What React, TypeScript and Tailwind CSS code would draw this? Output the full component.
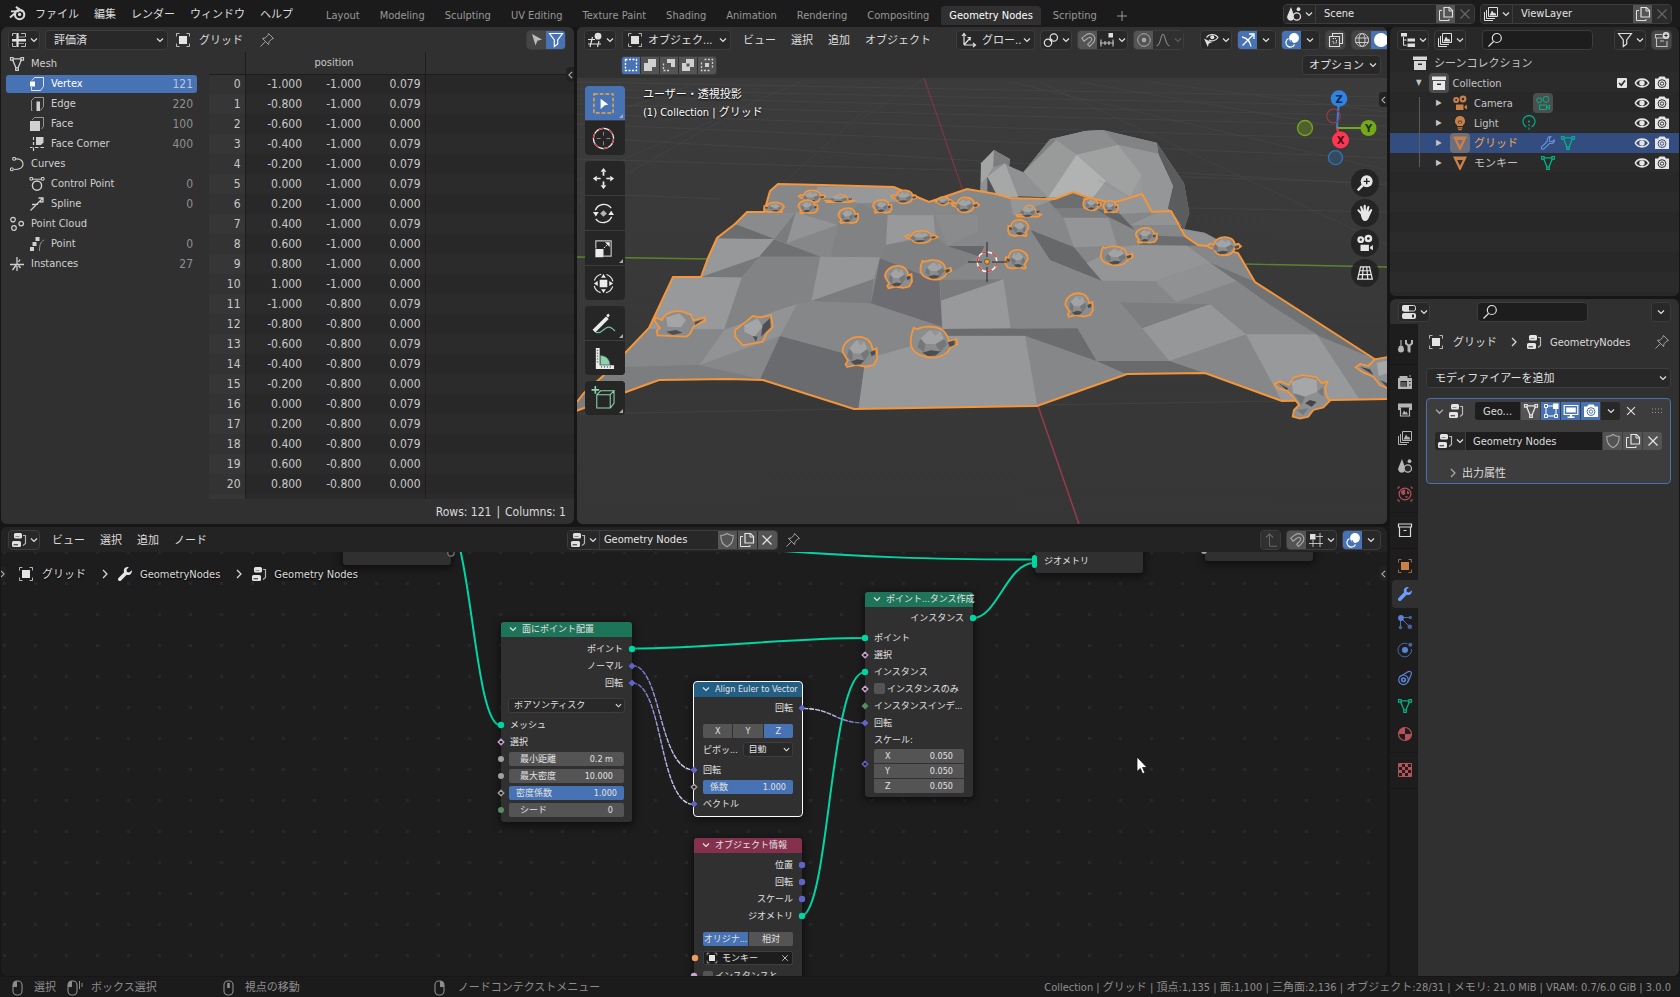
import React from "react";

/* ---------- icons (16 x 16 grid) ---------- */

const S = { fill: "currentColor", stroke: "none" } as const;

const ICONS: Record<string, React.ReactNode> = {
  blender: (
    <>
      <circle cx="10" cy="9" r="4.4" strokeWidth="2" />
      <circle cx="10" cy="9" r="1.6" {...S} />
      <path d="M6.5 1.8 13 6.2M1.8 6h8M.9 11.8 6.5 7" strokeWidth="1.8" />
    </>
  ),
  sheet: (
    <>
      <path d="M1.5 4V1.5H5M10 1.5h4.5V5M1.5 11v3.5H5M10 14.5h4.5V11" strokeWidth="1" opacity=".8" />
      <path d="M6.5 1.5v13M1 8h14M7 5h7M7 11.5h6" strokeWidth="1" opacity=".6" />
      <path d="M1 7h14v2.4H1zM5.4 1h2.2v14H5.4z" {...S} />
    </>
  ),
  object: (
    <>
      <path d="M1.5 4.5v-3h3M11.5 1.5h3v3M14.5 11.5v3h-3M4.5 14.5h-3v-3" strokeWidth="1" opacity=".75" />
      <path d="M4 4h8v8H4z" {...S} />
    </>
  ),
  pin: <path d="M9.5 1.5 14.5 6.5 12.5 7.2 10 9.8 9.6 12.6 3.4 6.4 6.2 6 8.8 3.5zM6.3 9.7 1.5 14.5" strokeWidth="1" />,
  arrow: <path d="M3 2 13 7.5 8.4 8.8 6.5 13.5z" {...S} />,
  filter: <path d="M1.5 1.5h13L9.7 8v4l-3.4 2.5V8z" />,
  mesh: (
    <>
      <path d="M3.5 3.5 7 12M12.5 3.5 9 12M4 2.8h8" strokeWidth="1.3" />
      <path d="M1.5 1.5h2.6v2.6H1.5zM11.9 1.5h2.6v2.6h-2.6zM6.7 11.8h2.6v2.6H6.7z" strokeWidth="1.2" />
    </>
  ),
  vertex: (
    <>
      <path d="M3 4.5 5.5 1.5h9v9l-3 4h-9V11" strokeWidth="1" opacity=".8" />
      <path d="M1 5.5h5v5H1z" {...S} />
    </>
  ),
  edge: (
    <>
      <path d="M3.5 14.5h-1V4.5l3-3h9v9l-3 4" strokeWidth="1" opacity=".65" />
      <path d="M7.5 5.5H11V15H7.5z" {...S} />
    </>
  ),
  face: (
    <>
      <path d="M3 4 5.5 1.5h9v9L12.5 13" strokeWidth="1" opacity=".65" />
      <path d="M1 5h10v10H1z" {...S} />
    </>
  ),
  corner: (
    <>
      <path d="M4.5 1v3M4.5 6v3M4.5 11.5v3.5M1 11.5h2.5M6 11.5h3.5M11.5 11.5H15" strokeWidth="1.2" />
      <path d="M7 1h7.5v5.5L12 9H7z" {...S} />
    </>
  ),
  curve: (
    <>
      <path d="M6.5 3C12 2.5 14.5 5.5 14 9c-.5 3-4 4.5-9 4.5" />
      <path d="M3.8 1.5h2.6v2.6H3.8zM1.5 12h2.6v2.6H1.5z" strokeWidth="1" />
    </>
  ),
  control: (
    <>
      <circle cx="8" cy="9.6" r="4.6" strokeWidth="1.4" />
      <path d="M3.5 3.2h9" strokeWidth="1" />
      <path d="M1 1.5h2.6v2.6H1zM12.4 1.5H15v2.6h-2.6z" strokeWidth="1" />
    </>
  ),
  spline: <path d="M1.5 14.5 7 9l6.500-6.500M3 8.500l6-.2M9.500 2h4.500v4.500M11 6l3-.2" strokeWidth="1.3" />,
  cloud: (
    <>
      <circle cx="4" cy="3.6" r="2.3" />
      <circle cx="12.2" cy="7.6" r="2.3" />
      <circle cx="5" cy="12" r="2.3" />
    </>
  ),
  point: (
    <>
      <path d="M6.5 1h4v4h-4zM3.5 6h4v4h-4zM1 11h4v4H1z" {...S} />
      <path d="M15 4c-4 2-4.5 6-4.5 11" strokeWidth="1" opacity=".6" />
    </>
  ),
  axes: <path d="M8 1v7M1 8.500h14M8 8l-4.500 6M8 10v5M11 3.500 9.500 6M11.500 12l-2-2.500" strokeWidth="1.3" />,
  view3d: (
    <>
      <path d="M1 7.500h7M1 12h13M5.500 5 3 15M12 9l-1.500 6" strokeWidth="1.2" />
      <circle cx="11" cy="4.2" r="3.4" {...S} />
    </>
  ),
  orient: <path d="M3 13V2M1 4l2-2.500L5 4M3 13h11M12 11l2.500 2-2.500 2M3 13 9 6M6.500 5.500 9.300 5.600 9 8.500" strokeWidth="1.2" />,
  pivot: (
    <>
      <circle cx="5" cy="10.8" r="3.7" />
      <circle cx="10.8" cy="5.5" r="3.7" />
      <circle cx="8" cy="8" r="1.5" {...S} />
    </>
  ),
  magnet: <path d="M1.8 6.2 5.3 3.3C8 1 12 1 13.8 3.8s.8 6-1.6 8L9.5 14.4 7.6 12.3l2.8-2.6c1.3-1.2 1.8-2.7.9-3.7s-2.6-.6-3.8.5L4 9.2z" strokeWidth="1.1" />,
  snap: (
    <>
      <path d="M1 11h14M2 7.500v7M6 9v4M10 9v4M14 7.500v7" strokeWidth="1.2" opacity=".8" />
      <path d="M9.500 1H14v4.500H9.500z" {...S} />
    </>
  ),
  prop: (
    <>
      <circle cx="8" cy="8" r="6.3" strokeWidth="1" />
      <circle cx="8" cy="8" r="2.2" {...S} />
    </>
  ),
  falloff: <path d="M1.500 14C6 13.500 5.500 2.200 8 2.200S10 13.500 14.500 14" strokeWidth="1.1" />,
  visibility: (
    <>
      <path d="M3.500 5.500C6 1.500 12.500 1.500 15 5.500 12.500 9.500 8 9.300 6 8" />
      <circle cx="9.300" cy="5.300" r="2" {...S} />
      <path d="M1 6.500 9 10.500 5.800 11.500 4.800 15z" {...S} />
    </>
  ),
  gizmo: <path d="M2 5c5 1 8 4 9 9.500M2.500 13.500 13.500 2.500M9 2h5v5" strokeWidth="1.3" />,
  overlay: (
    <>
      <circle cx="10" cy="6" r="4.900" {...S} />
      <path d="M4.500 6.500a4.500 4.500 0 1 0 6 6" strokeWidth="1.200" />
      <path d="M7 8a3 3 0 0 0 2 3" stroke="#4772b3" />
    </>
  ),
  xray: (
    <>
      <path d="M4.500 4V1.500h10v10H12" strokeWidth="1.100" />
      <path d="M1.500 4.500h10v10h-10z" strokeWidth="1.100" />
      <path d="M5 7v-.5h3M8.500 8v3H5V9" strokeWidth="1" strokeDasharray="1.500 1" />
    </>
  ),
  globe: (
    <>
      <circle cx="8" cy="8" r="6.500" strokeWidth="1" />
      <ellipse cx="8" cy="8" rx="3" ry="6.500" strokeWidth="1" />
      <path d="M1.500 6h13M1.500 10.500h13" strokeWidth="1" />
    </>
  ),
  solid: <circle cx="8" cy="8" r="7" {...S} />,
  scene: (
    <>
      <path d="M5 1 8 9.500a3.600 3.600 0 1 1-6.500 0z" {...S} />
      <circle cx="10.800" cy="10.500" r="3.700" fill="#262626" strokeWidth="1.300" />
      <circle cx="12.500" cy="3.200" r="1.900" {...S} />
    </>
  ),
  layers: (
    <>
      <path d="M5.500 1.500h9v9h-9zM3.500 4v8.500H12M1.500 6v8.500H10" strokeWidth="1" />
      <path d="M6.500 9.500 9 4.500l2 3 1-1 1.500 3z" {...S} />
    </>
  ),
  dup: (
    <>
      <path d="M6 1.500h5.500l3 3v6.500H6z" />
      <path d="M11 1.500V5h3.500M4 4.500H1.500v10h9.500V13" strokeWidth="1" />
    </>
  ),
  close: <path d="M3.500 3.500 12.500 12.500M12.500 3.500 3.500 12.500" />,
  tree: (
    <>
      <path d="M1 1h6v3.500H1zM7.500 6.500H15V9.500H7.500zM7.500 11.500H15V15H7.500z" {...S} />
      <path d="M3.500 5v8.200H6.500M3.500 8H6.500" strokeWidth="1" />
    </>
  ),
  search: (
    <>
      <circle cx="9.800" cy="6" r="4.500" />
      <path d="M6.500 9.500 1.500 14.500" />
    </>
  ),
  addcol: (
    <>
      <path d="M8 2.500H1.500v3.500h13M2.500 6.500v8h10.500V9M6 9h4" strokeWidth="1.100" opacity=".8" />
      <circle cx="12" cy="3.500" r="3.400" {...S} />
      <path d="M12 1.700v3.600M10.200 3.500h3.600" stroke="#333" strokeWidth="1" />
    </>
  ),
  archive: (
    <>
      <path d="M1 1.500h14V5H1zM2 6h12v9H2z" {...S} />
      <path d="M6 8.500h4v1.500H6z" fill="#2b2b2b" stroke="none" />
    </>
  ),
  archiveO: <path d="M1.500 2h13v3h-13zM2.500 5.500v9h11v-9M6.500 8.500h3" strokeWidth="1.200" />,
  eye: (
    <>
      <path d="M1.300 8C4 2.800 12 2.800 14.700 8 12 13.200 4 13.200 1.300 8z" strokeWidth="1.600" />
      <circle cx="8" cy="8" r="2.700" {...S} />
    </>
  ),
  photo: (
    <>
      <path d="M1 3.500h3L5.500 1.500h5L12 3.500h3V14H1z" {...S} />
      <circle cx="8" cy="8.600" r="3.900" stroke="var(--ib)" strokeWidth="1" />
      <circle cx="8" cy="8.600" r="1.700" stroke="var(--ib)" strokeWidth=".9" />
    </>
  ),
  movie: (
    <>
      <circle cx="4.200" cy="5" r="3" {...S} />
      <circle cx="11" cy="4" r="3.400" {...S} />
      <path d="M4 9.500h7.500V15H4zM12.500 11.500 15 9.800v4.700l-2.500-1.700z" {...S} />
      <circle cx="4.200" cy="5" r="1" fill="var(--ib)" stroke="none" />
      <circle cx="11" cy="4" r="1.200" fill="var(--ib)" stroke="none" />
    </>
  ),
  movieO: (
    <>
      <circle cx="4.200" cy="5.300" r="2.500" strokeWidth="1" />
      <circle cx="11" cy="4.300" r="3" strokeWidth="1" />
      <path d="M4.500 10h7v4.500h-7zM12.500 11.500 14.500 10v4.500l-2-1.500z" strokeWidth="1" />
    </>
  ),
  bulb: (
    <>
      <path d="M8 1a5 5 0 0 0-3 9v1h6v-1a5 5 0 0 0-3-9z" {...S} />
      <path d="M5.500 12.800h5M6.300 14.700h3.400" strokeWidth="1.200" />
      <path d="M6 6.500l1 2M10 6.500l-1 2M6.500 6h3" stroke="#2b2b2b" strokeWidth=".8" />
    </>
  ),
  lightData: (
    <>
      <path d="M5.500 12A6 6 0 1 1 10.500 12" strokeWidth="1.200" />
      <circle cx="8" cy="6.500" r="1" {...S} />
      <path d="M8 9v2M8 12.500V15" strokeWidth="1" />
    </>
  ),
  tri: <path fillRule="evenodd" d="M1 1.500h14L8.600 15H7.400zM5.200 5 8 10.800 10.800 5z" {...S} />,
  wrench: <path d="M14.700 4.200 12.300 6.400 9.900 5.900 9.500 3.600 11.800 1.300C9.400.5 6.900 2 6.800 4.700c0 .6.100 1.100.300 1.600L1.500 11.900c-.8.8-.7 1.900 0 2.600s1.800.8 2.600 0l5.600-5.700c3.200 1.100 5.900-1.800 5-4.600z" {...S} />,
  wrenchO: <path d="M14.300 5 12.300 6.600 9.700 6.200 9.300 3.700 11 1.700C8.800 1.200 6.900 2.700 7.100 5.100l.2 1.100L1.800 11.800c-.9 1-.3 2.500 1 2.500.5 0 .9-.2 1.300-.6L9.700 8.300c3.100.9 5.100-1.100 4.600-3.300z" strokeWidth="1.100" />,
  props: (
    <>
      <rect x="1.500" y="1.500" width="13" height="5.500" rx="2" strokeWidth="1" />
      <path d="M1 3a2 2 0 0 1 2-2h5v6.500H3a2 2 0 0 1-2-2z" {...S} />
      <rect x="1" y="9" width="14" height="6" rx="2" {...S} />
      <path d="M11 10.500h2v3h-2z" fill="#282828" stroke="none" />
    </>
  ),
  nodes: (
    <>
      <rect x="3" y="1" width="8" height="5.500" rx="1.500" {...S} />
      <rect x="1" y="9" width="9" height="6" rx="1.500" {...S} />
      <path d="M2.500 12.800h4.500" stroke="#222" strokeWidth="1" />
      <path d="M4.500 4.500h4" stroke="#777" strokeWidth=".8" />
      <path d="M12 3.500h2.500v8L12 13.500" strokeWidth="1.200" opacity=".75" />
    </>
  ),
  tool: (
    <>
      <circle cx="4" cy="11.500" r="3" {...S} />
      <path d="M4 2v8M1.800 8.500h4.400" strokeWidth="1.200" />
      <path d="M9 2v3.500l2.500 2v6M15 2v3.500l-2.500 2v7" strokeWidth="2" />
    </>
  ),
  render: (
    <>
      <path d="M1 4h1.500V2h8v2H15v11H1z" {...S} />
      <path d="M3.500 7h6.500v5.500H3.500z" fill="#1d1d1d" stroke="none" />
      <path d="M4 9h5.500M4 11h5.500" strokeWidth=".8" />
      <path d="M12 7.500h1.500M12 11h1.500" stroke="#1d1d1d" />
      <path d="M12 2h2" />
    </>
  ),
  output: (
    <>
      <path d="M1 1.500h14V8h-2V5.500H3V8H1z" {...S} />
      <path d="M3.500 5.500v8.500h9V5.500" strokeWidth="1.200" />
      <path d="M5 12.500 7 8.500l1.500 2 1-1 1.500 3z" {...S} />
    </>
  ),
  world: (
    <>
      <circle cx="8" cy="8" r="5.900" strokeWidth="1.200" />
      <path d="M4 5.500 6.500 3.500l2 .5L7.500 6l1 1.500L6.500 9 4.500 8zM10.300 4.500l2.200 2.500-1.300 1.500L9.800 7zM8.500 10l2.500.5L9 12.500z" {...S} />
      <path d="M1 3V1h2M15 3V1h-1.500M1 13v2h2M15 13v2h-2" strokeWidth="1" />
    </>
  ),
  particles: (
    <>
      <circle cx="4" cy="4" r="2.900" {...S} />
      <circle cx="13.300" cy="3.500" r="1.700" {...S} opacity=".7" />
      <circle cx="3.500" cy="13.500" r="1.700" {...S} opacity=".7" />
      <circle cx="12.800" cy="12.800" r="2.300" {...S} opacity=".7" />
      <path d="M6 3.500h6M3.500 6v6M5.500 5.500l6 6" strokeWidth="1" opacity=".8" />
    </>
  ),
  physics: (
    <>
      <circle cx="8" cy="8" r="3" {...S} />
      <path d="M10.500 1.800A6.800 6.800 0 1 0 14.500 7" strokeWidth="1" opacity=".7" />
      <circle cx="13.300" cy="2.800" r="2" {...S} opacity=".7" />
    </>
  ),
  constraint: (
    <>
      <circle cx="6.500" cy="9.800" r="4.800" strokeWidth="1.200" />
      <circle cx="6.500" cy="9.800" r="1.800" strokeWidth="1.700" />
      <path d="M2.500 7 11.300 1.600c2-.9 3.700.7 3 2.600L11 12" strokeWidth="1.200" />
    </>
  ),
  material: (
    <>
      <circle cx="8" cy="8" r="6.500" strokeWidth="1.200" />
      <path d="M8 1.500A6.500 6.500 0 0 0 1.500 8H8zM8 8h6.500A6.500 6.500 0 0 1 8 14.500z" {...S} />
    </>
  ),
  texture: (
    <>
      <path d="M1.500 1.500h13v13h-13z" strokeWidth="1" />
      <path d="M2 2h3v3H2zM8 2h3v3H8zM5 5h3v3H5zM11 5h3v3h-3zM2 8h3v3H2zM8 8h3v3H8zM5 11h3v3H5zM11 11h3v3h-3z" {...S} />
    </>
  ),
  shield: <path d="M8 1.500C6 3 4 3.500 1.800 3.500 1.600 8.500 3 12.500 8 14.700 13 12.500 14.400 8.500 14.200 3.500 12 3.500 10 3 8 1.500z" strokeWidth="1.100" />,
  vmode: (
    <>
      <path d="M3 5v6M5 13h6M13 11V6M4.500 3H10" strokeWidth="1" />
      <path d="M1.500 1.500H4.500V4.500H1.500zM1.500 11.500h3v3h-3zM11.500 11.500h3v3h-3z" strokeWidth="1" />
      <path d="M10 .5h5.500V6H10z" {...S} />
    </>
  ),
  monitor: (
    <>
      <path d="M1.200 2.500h13.600v9H1.200z" strokeWidth="1.200" />
      <path d="M3.200 4.500h9.600v5H3.200zM7 12h2v2H7zM4.500 13.500h7V15h-7z" {...S} />
    </>
  ),
  up: <path d="M6.500 14V2M3 5.500 6.500 1.800 10 5.500M6.500 14.300H14" strokeWidth="1.100" />,
  grid: (
    <>
      <path d="M1 11.500h14M5 8v7M12 1v14M8 4.500h7" strokeWidth="1" opacity=".8" />
      <path d="M2 2h5.500v5.500H2z" {...S} />
    </>
  ),
};

function Ic({ n, c = "size-4" }: { n: string; c?: string }) {
  return (
    <svg viewBox="0 0 16 16" className={`shrink-0 ${c}`} fill="none" stroke="currentColor" strokeWidth="1.2" aria-hidden="true">
      {ICONS[n]}
    </svg>
  );
}

function Chev({ c = "" }: { c?: string }) {
  return (
    <svg viewBox="0 0 8 8" className={`size-2 shrink-0 ${c}`} fill="none" stroke="currentColor" strokeWidth="1.2" aria-hidden="true">
      <path d="M1 2.500 4 5.500 7 2.500" />
    </svg>
  );
}

function ChevRight({ c = "" }: { c?: string }) {
  return (
    <svg viewBox="0 0 6 10" className={`h-[10px] w-[6px] shrink-0 ${c}`} fill="none" stroke="currentColor" strokeWidth="1.2" aria-hidden="true">
      <path d="M1 1 5 5 1 9" />
    </svg>
  );
}

/* ---------- shared widgets ---------- */

function IconDrop({ n, label, c = "" }: { n: string; label: string; c?: string }) {
  return (
    <button aria-label={label} className={`flex h-5 w-8 shrink-0 items-center justify-center gap-[3px] rounded border border-[#3d3d3d] bg-[#282828] text-[#e0e0e0] ${c}`}>
      <Ic n={n} />
      <Chev />
    </button>
  );
}

function Drop({ value, label, c, pad = "pl-2", icon }: { value: string; label: string; c: string; pad?: string; icon?: string }) {
  return (
    <div className={`relative flex h-5 shrink-0 items-center rounded border border-[#3d3d3d] bg-[#282828] text-[#e0e0e0] ${c}`}>
      {icon && <Ic n={icon} c="absolute left-1 size-4" />}
      <select aria-label={label} className={`h-full w-full appearance-none bg-transparent pr-3 pt-[2px] outline-none ${pad}`}>
        <option>{value}</option>
      </select>
      <Chev c="pointer-events-none absolute right-[3px]" />
    </div>
  );
}

function IconBtn({ n, label, c = "bg-[#545454] text-[#e0e0e0]" }: { n: string; label: string; c?: string }) {
  return (
    <button aria-label={label} className={`flex h-full w-[19px] shrink-0 items-center justify-center ${c}`}>
      <Ic n={n} />
    </button>
  );
}

function Group({ children, c = "" }: { children: React.ReactNode; c?: string }) {
  return <div className={`flex h-5 shrink-0 overflow-hidden rounded border border-[#3d3d3d] bg-[#282828] ${c}`}>{children}</div>;
}

function ChevBtn({ label, c = "w-5" }: { label: string; c?: string }) {
  return (
    <button aria-label={label} className={`flex h-full items-center justify-center text-[#e0e0e0] ${c}`}>
      <Chev />
    </button>
  );
}

function Menus({ items, c }: { items: string[]; c: string }) {
  return (
    <nav className={`flex shrink-0 gap-[15px] whitespace-nowrap pt-[2px] text-[#dcdcdc] ${c}`}>
      {items.map((m) => (
        <button key={m}>{m}</button>
      ))}
    </nav>
  );
}

function Search({ label, c }: { label: string; c: string }) {
  return (
    <div className={`flex h-5 items-center rounded border border-[#3d3d3d] bg-[#1d1d1d] px-1 text-[#e0e0e0] ${c}`}>
      <Ic n="search" />
      <input type="search" aria-label={label} className="min-w-0 flex-1 bg-transparent outline-none" />
    </div>
  );
}

/* ---------- top bar ---------- */

const WORKSPACES = ["Layout", "Modeling", "Sculpting", "UV Editing", "Texture Paint", "Shading", "Animation", "Rendering", "Compositing", "Geometry Nodes", "Scripting"];

function DataPicker({ icon, value }: { icon: string; value: string }) {
  return (
    <Group c="w-48 bg-[#1d1d1d]">
      <button aria-label={`${value} browse`} className="flex h-full w-8 items-center justify-center gap-[3px] border-r border-[#3d3d3d] bg-[#282828] text-[#e0e0e0]">
        <Ic n={icon} />
        <Chev />
      </button>
      <input aria-label={value} defaultValue={value} className="min-w-0 flex-1 bg-transparent px-2 pt-px text-[#e5e5e5] outline-none" />
      <IconBtn n="dup" label="New" />
      <IconBtn n="close" label="Remove" c="bg-[#2c2c2c] text-[#666]" />
    </Group>
  );
}

function TopBar() {
  return (
    <header className="flex h-[27px] items-center bg-[#1b1b1b] pr-2">
      <Ic n="blender" c="ml-[9px] size-[17px] text-[#d8d8d8]" />
      <Menus c="ml-[9px]" items={["ファイル", "編集", "レンダー", "ウィンドウ", "ヘルプ"]} />
      <nav className="ml-[25px] flex shrink-0 items-end gap-1 self-end pb-[2px] text-[#989898]">
        {WORKSPACES.map((w) => (
          <button key={w} className={w === "Geometry Nodes" ? "h-[19px] rounded-t bg-[#303030] px-2 text-white" : "h-[19px] px-2"}>
            {w}
          </button>
        ))}
        <button aria-label="Add workspace" className="flex h-[19px] items-center pl-2">
          <svg viewBox="0 0 10 10" className="size-[10px]" stroke="currentColor" aria-hidden="true">
            <path d="M5 0v10M0 5h10" />
          </svg>
        </button>
      </nav>
      <div className="ml-auto flex shrink-0 gap-[5px]">
        <DataPicker icon="scene" value="Scene" />
        <DataPicker icon="layers" value="ViewLayer" />
      </div>
    </header>
  );
}

/* ---------- spreadsheet ---------- */

type Dom = { n: string; label: string; count?: number; child?: boolean; on?: boolean };
const DOMAINS: Dom[] = [
  { n: "mesh", label: "Mesh" },
  { n: "vertex", label: "Vertex", count: 121, child: true, on: true },
  { n: "edge", label: "Edge", count: 220, child: true },
  { n: "face", label: "Face", count: 100, child: true },
  { n: "corner", label: "Face Corner", count: 400, child: true },
  { n: "curve", label: "Curves" },
  { n: "control", label: "Control Point", count: 0, child: true },
  { n: "spline", label: "Spline", count: 0, child: true },
  { n: "cloud", label: "Point Cloud" },
  { n: "point", label: "Point", count: 0, child: true },
  { n: "axes", label: "Instances", count: 27 },
];
const RAISED = new Set([0, 1, 3, 4, 5, 7, 11, 13, 14, 16, 17, 18]);
const ROWS = Array.from({ length: 21 }, (_, i) => [
  (((i % 11) - 5) * 0.2).toFixed(3),
  (Math.floor(i / 11) * 0.2 - 1).toFixed(3),
  RAISED.has(i) ? "0.079" : "0.000",
]);

function Spreadsheet() {
  return (
    <section className="relative flex min-w-0 flex-col overflow-hidden rounded-md bg-[#303030]">
      <div className="flex h-[25px] items-center pl-[7px] pr-2">
        <IconDrop n="sheet" label="Editor type" />
        <Drop value="評価済" label="Object state" c="ml-[5px] w-[123px]" />
        <Ic n="object" c="ml-[7px] size-4 text-[#e5e5e5]" />
        <span className="ml-2 pt-[2px] text-[#dcdcdc]">グリッド</span>
        <Ic n="pin" c="ml-4 size-4 text-[#a0a0a0]" />
        <Group c="ml-auto">
          <IconBtn n="arrow" label="Selected only" c="bg-[#454545] text-[#bbb]" />
          <IconBtn n="filter" label="Filter" c="bg-[#4772b3] text-white" />
        </Group>
      </div>
      <div className="flex flex-1">
        <ul className="w-[208px] shrink-0 pt-[2px] text-[#d0d0d0]">
          {DOMAINS.map((d) => (
            <li key={d.label} className="py-px pl-[5px] pr-3">
              <button className={`flex h-[18px] w-full items-center rounded-[3px] pr-1 ${d.child ? "pl-[23px]" : "pl-[3px]"} ${d.on ? "bg-[#4772b3] text-white" : ""}`}>
                <Ic n={d.n} />
                <span className={d.child ? "ml-[6px]" : "ml-[6px]"}>{d.label}</span>
                <span className={`ml-auto text-xs ${d.on ? "text-[#b9c8e0]" : "text-[#8f8f8f]"}`}>{d.count}</span>
              </button>
            </li>
          ))}
        </ul>
        <div className="h-[447px] flex-1 overflow-hidden bg-[#282828]">
          <table className="w-full table-fixed border-collapse text-right text-xs text-[#c8c8c8]">
            <colgroup>
              <col className="w-9" />
              <col className="w-[59px]" />
              <col className="w-[59px]" />
              <col className="w-[62px]" />
              <col />
            </colgroup>
            <thead>
              <tr className="h-[22px] border-b border-[#1d1d1d] bg-[#303030] text-[11px]">
                <th aria-label="Index" className="border-r border-[#1d1d1d] bg-[#303030]" />
                <th colSpan={3} className="border-r border-[#1d1d1d] p-0 pr-[2px] pt-[2px] text-center font-normal">
                  position
                </th>
                <th aria-label="Empty" />
              </tr>
            </thead>
            <tbody>
              {ROWS.map((r, i) => (
                <tr key={i} className="h-5 odd:bg-[#282828] even:bg-[#2b2b2b]">
                  <th className={`border-r border-[#1d1d1d] p-0 pr-1 font-normal ${i % 2 ? "bg-[#363636]" : "bg-[#333333]"}`}>{i}</th>
                  <td className="p-0 pr-[2px]">{r[0]}</td>
                  <td className="p-0 pr-[2px]">{r[1]}</td>
                  <td className="border-r border-[#1d1d1d] p-0 pr-1">{r[2]}</td>
                  <td />
                </tr>
              ))}
              <tr aria-hidden="true" className="h-5 bg-[#2b2b2b]">
                <td className="border-r border-[#1d1d1d] bg-[#363636]" />
                <td />
                <td />
                <td className="border-r border-[#1d1d1d]" />
                <td />
              </tr>
            </tbody>
          </table>
        </div>
      </div>
      <footer className="flex h-[25px] items-center justify-end gap-[5px] whitespace-pre pr-2 text-xs text-[#dcdcdc]">
        <span>Rows: 121</span>
        <span>|</span>
        <span>Columns: 1</span>
      </footer>
      <RegionTab c="right-0 top-10" />
    </section>
  );
}

function RegionTab({ c, flip }: { c: string; flip?: boolean }) {
  return (
    <button aria-label="Toggle region" className={`absolute flex h-[15px] w-2 items-center justify-center bg-[#222] text-[#bbb] ${flip ? "rounded-r" : "rounded-l"} ${c}`}>
      <svg viewBox="0 0 6 10" className="h-2 w-[5px]" fill="none" stroke="currentColor" strokeWidth="1.3" aria-hidden="true">
        <path d={flip ? "M1 1 5 5 1 9" : "M5 1 1 5 5 9"} />
      </svg>
    </button>
  );
}

/* ---------- 3D viewport ---------- */

const HEADS: Record<string, string> = {
  a: "M-50-5-42-14-31-8C-28-38-12-50 3-49 22-47 30-32 32-9L42-14 50 0 40 12 31 12C27 38 12 49-4 48-20 46-28 34-31 12L-43 8Z",
  b: "M-48 8C-50-12-46-30-42-44L-34-40C-20-52 8-50 20-36 28-26 31-12 32-2L48-10 50 6 36 14C30 36 12 50-8 46-30 42-44 32-48 8Z",
  c: "M-46 0C-48-28-25-50 2-49 24-47 34-28 37-8L48-12 50 20 40 42 18 48-8 42-34 49-38 40-32 28Z",
  f: "M-50 26-24 22C-22-26-8-44 4-44 20-42 26-20 30 10L50 24 40 40-46 40Z",
};
type Head = [string, number, number, number, number, boolean?];
const HEADS_L: Head[] = [
  ["c", 595, 382, 62, 30, true], ["a", 708, 350, 80, 38], ["c", 695, 380, 60, 40], ["f", 791, 356, 84, 26],
  ["c", 816, 407, 62, 46], ["c", 918, 379, 58, 40], ["a", 985, 351, 78, 40], ["a", 1102, 363, 54, 24],
  ["a", 1168, 375, 82, 46], ["a", 1036, 471, 96, 38], ["c", 966, 591, 84, 68], ["b", 1079, 570, 94, 62],
  ["c", 850, 816, 108, 92], ["b", 1073, 787, 142, 98],
];
const HEADS_R: Head[] = [
  ["f", 146, 394, 74, 40], ["c", 116, 444, 64, 50, true], ["c", 111, 538, 70, 58, true], ["b", 336, 373, 54, 38],
  ["c", 391, 380, 46, 36], ["b", 410, 528, 98, 60], ["c", 498, 466, 66, 46], ["a", 733, 499, 100, 56], ["c", 296, 675, 86, 72],
];

function Suzanne({ h }: { h: Head }) {
  const [k, x, y, w, t, flip] = h;
  return (
    <g transform={`translate(${x} ${y}) scale(${((flip ? -1 : 1) * w) / 100} ${t / 100})`}>
      <path d={HEADS[k]} fill="#8b8c8d" stroke="#f5963a" strokeWidth="1.8" vectorEffect="non-scaling-stroke" />
      <path d="M-28-12-8-38 14-34 22-10 4 6-18 4Z" fill="#a2a3a4" />
      <path d="M-28-12-18 4-20 30-34 14ZM4 6 22-10 28 6 14 30Z" fill="#767778" />
      <path d="M-24 32-6 24 14 28 4 40-12 42ZM30 0 44-6 44 8 34 14Z" fill="#4c4d4f" />
      <path d="M-8-38 14-34 4-20Z" fill="#949596" />
    </g>
  );
}

const P = ({ p, f }: { p: string; f: string }) => <polygon points={p} fill={f} />;
const LEFT = "translate(576 80) scale(.33333)";
const RIGHT = "translate(980 80) scale(.33333)";

function Scene3D() {
  return (
    <svg viewBox="577 27 810 497" preserveAspectRatio="xMidYMid slice" className="absolute inset-0 size-full" aria-label="3D scene">
      <defs>
        <linearGradient id="sky" x1="0" y1="0" x2="0" y2="1">
          <stop offset="0" stopColor="#3c3c3c" />
          <stop offset="1" stopColor="#363636" />
        </linearGradient>
      </defs>
      <rect x="577" y="27" width="810" height="497" fill="url(#sky)" />
      <g stroke="#474747" strokeWidth="1" fill="none">
        <path d="M577 82 1387 97M577 89 1387 106M577 96 1387 116M577 104 1387 126M577 114 1387 140M577 124 1387 158M577 137 1387 185M577 159 1387 183M577 193 720 199M1189 208 1387 212M577 414 850 409M1038 405 1282 401" opacity=".7" />
        <path d="M722 120 577 202M800 82 577 180M700 82 577 125M871 105 782 184M922 80 860 120M1040 82 1387 245M1010 82 1387 170M1080 82 1387 135M1150 82 1387 112" opacity=".6" />
      </g>
      <path d="M577 257 710 259M1246 264 1387 267" stroke="#5d842a" strokeWidth="1.3" />
      <path d="M924 78 963 191" stroke="#7c3540" strokeWidth="1.3" />
      <path d="M1038 406 1079 524" stroke="#983a49" strokeWidth="1.5" />

      <g transform={RIGHT}>
        <P f="#97999a" p="130,277 210,178 315,153 368,150 530,188 612,310 628,400 612,448 573,400 515,400 205,360" />
        <P f="#5b5c5e" p="530,188 612,310 628,400 612,448 573,392 563,385 579,318 535,222" />
        <P f="#8b8d8e" p="210,178 315,153 368,150 415,195 290,224 228,180" />
        <P f="#818384" p="368,150 530,188 535,222 415,195" />
        <P f="#999b9b" p="130,277 228,180 290,224 205,352" />
        <P f="#7e8081" p="130,277 210,178 228,180" />
        <P f="#b0b3b1" p="290,224 378,302 340,352 205,352" />
        <P f="#a0a2a2" p="290,224 415,195 485,285 450,352 378,302" />
        <P f="#949697" p="415,195 535,222 579,318 563,388 515,397 487,343 485,285" />
        <path d="M355 300 450 352" stroke="#7d7f80" fill="none" />
        <P f="#8f9192" p="3,250 42,210 90,237 88,258 130,277 205,352 0,345" />
        <P f="#a3a5a5" p="3,250 42,210 40,260 22,290 3,310" />
        <P f="#7b7d7e" p="42,210 90,237 86,258 75,250 40,262" />
        <P f="#a6a8a8" p="75,250 115,352 55,352 22,290" />
        <P f="#4f5053" p="22,290 50,345 22,338" />
        <P f="#8f9192" p="600,445 675,458 715,480 705,500 640,497 612,470" />
      </g>

      <polygon
        points="576,402 584,393 603,376 626,352 649,328 673,277 701,277 708,258 717,238 735,224 747,212 764,212 770,191 778,184 823,185 894,187 929,202 967,189 996,194 1010,198 1055,199 1073,192 1090,198 1113,203 1142,194 1152,212 1171,211 1185,236 1198,245 1215,247 1238,253 1255,282 1373,358 1390,368 1390,399 1282,401 1205,373 1127,374 1037,406 854,409 763,380 729,379 659,380 626,392 576,411"
        fill="#868789"
      />
      <g transform={LEFT}>
        <P f="#97989a" p="422,475 595,477 550,530 378,590 397,535" />
        <P f="#6c6d6f" p="478,432 595,477 422,475 450,452" />
        <P f="#6f7072" p="595,478 733,530 550,530" />
        <P f="#98999b" p="290,591 498,592 445,748 220,746" />
        <P f="#77787a" p="378,590 550,530 498,592" />
        <P f="#7b7c7e" p="660,397 565,396 480,432 632,490" />
        <P f="#8a8b8d" p="660,397 510,397 478,432 632,490 595,477" />
        <P f="#939496" p="660,397 785,435 632,490" />
        <P f="#97989a" p="722,320 955,321 1000,345 985,365 850,370 722,348" />
        <P f="#818284" p="785,435 850,370 938,405 930,495 912,532 765,530" />
        <P f="#828385" p="550,530 733,530 706,663 663,672 445,748 498,592" />
        <P f="#959698" p="733,530 912,532 893,597 706,663" />
        <P f="#98999b" p="935,405 1072,406 1078,462 930,495" />
        <P f="#7f8082" p="930,495 1078,470 1115,498 1205,530 1090,600 912,535" />
        <P f="#8a8b8d" p="1078,405 1205,405 1205,455 1115,498" />
        <P f="#66676b" p="1115,498 1225,498 1210,530" />
        <P f="#6d6d71" p="912,535 1040,585 1090,600 1098,740 885,670" />
        <P f="#7b7c7e" p="706,663 893,597 885,670" />
        <P f="#929395" p="445,750 555,708 663,672 612,768 370,855" />
        <P f="#6a6b6f" p="612,768 868,838 848,985 835,986 553,897" />
        <P f="#7c7d7f" p="370,855 553,897 460,897 250,901 150,937 5,990 0,965 80,888 150,860" />
        <P f="#97989a" p="868,838 1110,768 1347,766 1384,977 848,985" />
        <P f="#7a7b7d" p="1092,600 1282,598 1095,662" />
        <P f="#98999b" p="1095,662 1282,598 1304,745 1100,747" />
      </g>
      <g transform={RIGHT}>
        <P f="#6b6c6e" p="-112,747 292,745 350,843 135,767 -102,767" />
        <P f="#67686a" p="152,450 282,502 365,602 210,540" />
        <P f="#7c7d7f" p="225,385 345,387 395,415 250,413 205,362" />
        <P f="#949597" p="250,413 385,413 412,497 282,502" />
        <P f="#949597" p="475,495 615,493 690,548 525,603 367,602 320,550 412,500" />
        <P f="#909193" p="525,603 690,548 770,603 590,667" />
        <P f="#717274" p="690,548 825,605 1180,835 1010,765 867,673 770,603" />
        <P f="#7c7d7f" p="420,667 690,673 487,745" />
        <P f="#858688" p="770,603 867,673 1010,763 798,763 690,673 590,667" />
        <P f="#969799" p="487,745 690,673 798,763 568,843" />
        <P f="#696a6c" p="350,843 568,843 675,880 440,883" />
        <P f="#98999b" p="798,763 1010,763 1138,957 905,962" />
        <P f="#626365" p="345,385 385,410 465,450 420,402" />
        <P f="#6d6e70" p="205,362 280,337 330,355 345,385 225,385" />
        <P f="#959698" p="410,370 487,343 515,397 420,402" />
        <P f="#929395" p="520,402 573,392 595,435 450,435" />
        <P f="#6b6c6e" p="535,467 612,470 655,497 475,495" />
        <P f="#959698" p="90,356 225,358 100,405" />
      </g>
      <polyline
        points="577,402 584,393 603,376 626,352 649,328 673,277 701,277 708,258 717,238 735,224 747,212 764,212 770,191 778,184 823,185 894,187 929,202 967,189 996,194 1010,198 1055,199 1073,192 1090,198 1113,203 1142,194 1152,212 1171,211 1185,236 1198,245 1215,247 1238,253 1255,282 1373,358 1390,368 1390,399 1282,401 1205,373 1127,374 1037,406 854,409 763,380 729,379 659,380 626,392 576,411"
        fill="none"
        stroke="#f5963a"
        strokeWidth="2"
      />
      <g transform={LEFT}>
        {HEADS_L.map((h) => <Suzanne key={`${h[1]}-${h[2]}`} h={h} />)}
        <g stroke="#f5963a" strokeWidth="5.400">
          <path fill="#8a8b8c" d="M238 712 258 720C270 695 300 690 320 695L345 705 352 722 385 712 388 722 352 740C345 755 345 765 330 770L245 766 242 752 252 744 236 722Z" />
          <path fill="#8a8b8c" d="M477 750 510 725 530 708 555 712 585 705 590 740 572 760 560 785 500 796 478 770Z" />
        </g>
        <path fill="#a4a5a6" d="M270 712 310 700 330 720 315 742 275 740ZM505 735 545 715 560 740 535 770 505 755Z" />
        <path fill="#4e4f52" d="M560 735 582 715 584 742 555 770ZM270 755 300 750 320 758 290 765ZM356 726 382 718 358 735ZM530 768 545 770 540 785Z" />
      </g>
      <g transform={RIGHT}>
        {HEADS_R.map((h) => <Suzanne key={`${h[1]}-${h[2]}`} h={h} />)}
        <g stroke="#f5963a" strokeWidth="5.400" fill="#8e8f90">
          <path d="M883 912 900 904 927 915 940 893 970 885 1010 892 1025 910 1042 905 1035 925 1040 950 1050 962 1030 982 1000 990 985 1010 960 1016 938 1010 942 990 957 975 935 945 920 932 895 925Z" />
          <path d="M1127 862 1140 852 1165 858 1185 838 1230 830 1230 928 1200 915 1180 890 1150 878Z" />
        </g>
        <path fill="#a6a7a8" d="M935 905 975 892 1010 900 1012 935 975 950 940 940ZM1190 848 1222 842 1222 880 1196 888Z" />
        <path fill="#77787a" d="M940 940 975 950 965 975ZM1012 935 1030 920 1030 950ZM950 990 985 985 970 1005Z" />
        <path fill="#444547" d="M975 970 990 960 1010 966 995 980ZM895 910 925 925 920 930ZM1140 860 1170 868 1180 885ZM1200 900 1222 910 1222 922Z" />
      </g>

      <g fill="none">
        <circle cx="987" cy="261.700" r="9.800" stroke="#f2f2f2" strokeWidth="1.500" />
        <circle cx="987" cy="261.700" r="9.800" stroke="#e0383e" strokeWidth="1.500" strokeDasharray="5.130 5.130" />
        <path d="M987 242v15M987 267v15M968 262h14M992 262h15" stroke="#262626" />
        <circle cx="987" cy="261.700" r="2.600" fill="#f79a2c" stroke="#333" strokeWidth=".6" />
      </g>

      <g fontSize="11" textAnchor="middle" fontWeight="600">
        <path d="M1337 128 1339 98" stroke="#2f83e3" strokeWidth="2" />
        <path d="M1337 128H1368" stroke="#74a91a" strokeWidth="2" />
        <path d="M1337 128 1340 139" stroke="#ff3653" strokeWidth="2" />
        <circle cx="1333.500" cy="116" r="6.800" fill="none" stroke="#913a4c" strokeWidth="1.300" />
        <circle cx="1305" cy="128" r="7.500" fill="#50602f" stroke="#74a91a" strokeWidth="1.300" />
        <circle cx="1335.500" cy="157.700" r="7" fill="#364a5f" stroke="#3372b9" strokeWidth="1.300" />
        <circle cx="1339" cy="98.500" r="8.300" fill="#2f83e3" />
        <circle cx="1368.500" cy="128" r="8" fill="#74a91a" />
        <circle cx="1340.500" cy="140" r="8.500" fill="#ff3653" />
        <text x="1339" y="102.500" fill="#0e2846">Z</text>
        <text x="1368.500" y="132" fill="#20310a">Y</text>
        <text x="1340.500" y="144" fill="#4a0d17">X</text>
      </g>
    </svg>
  );
}

const TOOLS: Record<string, React.ReactNode> = {
  "Select box": (
    <>
      <path d="M2 2h20v20H2z" stroke="#f3a63c" strokeWidth="1.500" strokeDasharray="4 2" />
      <path d="M9 7 17 13 13 14 9 18z" fill="#fff" stroke="none" />
    </>
  ),
  Cursor: (
    <>
      <circle cx="12" cy="12" r="10.500" stroke="#eee" strokeWidth="1.300" />
      <circle cx="12" cy="12" r="10.500" stroke="#d0424c" strokeWidth="1.300" strokeDasharray="5.500 5.500" />
      <path d="M12 5v4M12 15v4M5 12h4M15 12h4" stroke="#8a8a8a" />
    </>
  ),
  Move: (
    <>
      <path d="M12 5v4M12 15v4M5 12h4M15 12h4" strokeWidth="1.800" strokeDasharray="4 1" />
      <path d="M12 1 15 5H9zM12 23 15 19H9zM1 12 5 9v6zM23 12 19 9v6z" {...S} />
    </>
  ),
  Rotate: (
    <>
      <path d="M3.500 8.500a9.500 9.500 0 0 1 16.500-2M20.500 15.500a9.500 9.500 0 0 1-16.500 2" strokeWidth="1.400" />
      <path d="M1 10.500h6L4 15zM17 13.500h6L20 9z" {...S} />
      <path d="M12 8.500 15.500 12 12 15.500 8.500 12z" fill="#b5b5b5" stroke="none" />
    </>
  ),
  Scale: (
    <>
      <path d="M4 12V4h16v16h-8" strokeWidth="1.200" opacity=".8" />
      <path d="M3.500 12.500h8.500V21H3.500zM18.500 5.500v5l-5-5z" {...S} />
      <path d="M12.500 11.500 17 7" strokeDasharray="2 1" />
    </>
  ),
  Transform: (
    <>
      <circle cx="12" cy="12" r="10" strokeWidth="1.200" strokeDasharray="10 5.700" strokeDashoffset="-3" />
      <path d="M8 8h8v8H8zM12 2l2.500 4h-5zM12 22l2.500-4h-5zM2 12l4-2.500v5zM22 12l-4-2.500v5z" {...S} />
    </>
  ),
  Annotate: (
    <>
      <path d="M2 20 16 6" strokeWidth="4" strokeLinecap="butt" />
      <path d="M15 3.500 17 1.500 18.500 4 16.500 6z" {...S} />
      <path d="M4 21c5 3 8-4 12-5 3-.8 5 .5 8 4" stroke="#6fbf97" strokeWidth="1.400" />
    </>
  ),
  Measure: (
    <>
      <path d="M4 1h4v18h15v4H4z" {...S} />
      <path d="M9 18.500V9c5.500 0 9.500 4 9.500 9.500z" fill="#8fd3ae" stroke="#5aa17d" strokeWidth=".6" />
      <path d="M5 3.500h1.500M5 6.500h1.500M5 9.500h1.500M5 12.500h1.500M5 15.500h1.500M10 21.500V20M13 21.500V20M16 21.500V20M19 21.500V20" stroke="#333" strokeWidth=".9" />
    </>
  ),
  "Add cube": (
    <>
      <path d="M5 8h14v14H5zM5 8l4-4h14L19 8M23 4v13l-4 5" stroke="#8fd3ae" strokeWidth="1.100" />
      <path d="M3.500-1v8M-.5 3h8" stroke="#8fd3ae" strokeWidth="1.700" />
    </>
  ),
};
const TOOL_GROUPS = [["Select box", "Cursor"], ["Move", "Rotate", "Scale", "Transform"], ["Annotate", "Measure"], ["Add cube"]];
const FLYOUT = new Set(["Select box", "Scale", "Annotate", "Add cube"]);

const SELECT_MODES = [
  <path key="0" d="M2.500 2.500h11v11h-11z" strokeDasharray="2 1.500" strokeWidth="1.400" />,
  <path key="1" d="M6 2h8v8h-4v4H2V6h4z" {...S} />,
  <g key="2"><path d="M6 2h8v8h-4V6H6z" {...S} /><path d="M2.500 6.500v7h7" strokeDasharray="2 1.500" strokeWidth="1.300" /></g>,
  <path key="3" fillRule="evenodd" d="M6 2h8v8h-4v4H2V6h4zM6.500 6.500v3h3v-3z" {...S} />,
  <g key="4"><path d="M5.500 2.500h8v8M2.500 5.500v8h8" strokeDasharray="2 1.500" strokeWidth="1.300" /><path d="M6 6h4v4H6z" {...S} /></g>,
];

function NavBtn({ label, children }: { label: string; children: React.ReactNode }) {
  return (
    <button aria-label={label} className="flex size-7 items-center justify-center rounded-full bg-[#222222]/90 text-[#e6e6e6]">
      <svg viewBox="0 0 16 16" className="size-[18px]" fill="none" stroke="currentColor" strokeWidth="1.2" aria-hidden="true">
        {children}
      </svg>
    </button>
  );
}

function Viewport() {
  return (
    <section className="relative flex min-w-0 flex-col overflow-hidden rounded-md bg-[#393939]">
      <Scene3D />
      <div className="relative bg-[#303030]/95">
        <div className="flex h-[25px] items-center pl-[7px]">
          <IconDrop n="view3d" label="Editor type" />
          <Drop value="オブジェク..." label="Mode" icon="object" c="ml-[6px] w-[109px]" pad="pl-[25px]" />
          <Menus c="ml-3" items={["ビュー", "選択", "追加", "オブジェクト"]} />
          <Drop value="グロー..." label="Orientation" icon="orient" c="ml-[25px] w-[79px]" pad="pl-[25px]" />
          <IconDrop n="pivot" label="Pivot" c="ml-[5px]" />
          <Group c="ml-[5px]">
            <IconBtn n="magnet" label="Snap" c="bg-[#545454] text-[#aaa]" />
            <button aria-label="Snap to" className="flex w-[30px] items-center justify-center gap-[3px] text-[#e0e0e0]"><Ic n="snap" /><Chev /></button>
          </Group>
          <Group c="ml-[5px]">
            <IconBtn n="prop" label="Proportional editing" c="bg-[#545454] text-[#aaa]" />
            <button aria-label="Falloff" className="flex w-[30px] items-center justify-center gap-[3px] bg-[#303030] text-[#888]"><Ic n="falloff" /><Chev c="opacity-50" /></button>
          </Group>
          <IconDrop n="visibility" label="Visibility" c="ml-4" />
          <Group c="ml-[5px]">
            <IconBtn n="gizmo" label="Gizmos" c="bg-[#4772b3] text-white" />
            <ChevBtn label="Gizmo options" c="w-[18px]" />
          </Group>
          <Group c="ml-[5px]">
            <IconBtn n="overlay" label="Overlays" c="bg-[#4772b3] text-white" />
            <ChevBtn label="Overlay options" c="w-[18px]" />
          </Group>
          <Group c="ml-[5px]">
            <IconBtn n="xray" label="X-ray" c="bg-[#454545] text-[#ddd]" />
          </Group>
          <Group c="ml-[5px]">
            <IconBtn n="globe" label="Wireframe" c="bg-[#454545] text-[#ccc]" />
            <IconBtn n="solid" label="Solid" c="bg-[#4772b3] text-white" />
          </Group>
        </div>
        <div className="flex h-[26px] items-center pl-11 pr-[6px]">
          <div className="flex gap-px overflow-hidden rounded-[3px] border border-[#3d3d3d] bg-[#303030]">
            {SELECT_MODES.map((m, i) => (
              <button key={i} aria-label={`Select mode ${i + 1}`} className={`flex h-[17px] w-[18px] items-center justify-center ${i === 0 ? "bg-[#4772b3] text-white" : "bg-[#545454] text-[#d0d0d0]"}`}>
                <svg viewBox="0 0 16 16" className="size-4" fill="none" stroke="currentColor" aria-hidden="true">{m}</svg>
              </button>
            ))}
          </div>
          <button className="ml-auto flex h-5 w-[79px] items-center justify-between rounded border border-[#3d3d3d] bg-[#282828] pl-[6px] pr-[3px] text-[#e0e0e0]">
            <span className="pt-[2px]">オプション</span>
            <Chev />
          </button>
        </div>
      </div>
      <div className="relative flex flex-1 items-start pb-[6px] pl-2 pt-2">
        <div className="flex w-10 flex-col gap-[6px]">
          {TOOL_GROUPS.map((g) => (
            <div key={g[0]} className="flex flex-col gap-px overflow-hidden rounded-[4px] bg-[#3d3d3d]">
              {g.map((t) => (
                <button key={t} aria-label={t} className={`relative flex h-[34px] items-center justify-center text-[#ececec] ${t === "Select box" ? "bg-[#4772b3]" : "bg-[#262626]"}`}>
                  <svg viewBox="0 0 24 24" className="mr-1 size-[23px] overflow-visible" fill="none" stroke="currentColor" aria-hidden="true">{TOOLS[t]}</svg>
                  {FLYOUT.has(t) && (
                    <svg viewBox="0 0 4 4" className="absolute bottom-[2px] right-[2px] size-1" aria-hidden="true"><path d="M4 0v4H0z" fill="#aaa" /></svg>
                  )}
                </button>
              ))}
            </div>
          ))}
        </div>
        <div className="ml-[18px] leading-[18px] text-white [text-shadow:0_1px_2px_#000]">
          <p>ユーザー・透視投影</p>
          <p>(1) Collection | グリッド</p>
        </div>
        <div className="ml-auto mr-2 mt-[83px] flex flex-col gap-[2px]">
          <NavBtn label="Zoom">
            <circle cx="9.500" cy="6.500" r="5.300" {...S} />
            <path d="M6 10 1.500 14.500" strokeWidth="2.200" />
            <path d="M9.500 3.800v5.400M6.800 6.500h5.400" stroke="#222" strokeWidth="1.200" />
          </NavBtn>
          <NavBtn label="Pan">
            <path d="M4.200 9 1.500 6.200c-.8-.9.400-2 1.300-1.200L4.700 6.800 3.700 2.900c-.3-1.200 1.300-1.600 1.700-.4L6.700 6 6.800 1.500C6.900.3 8.600.3 8.700 1.500L8.900 6l1.300-3.700c.4-1.100 2-.6 1.700.6L11 7l1.900-2.200c.8-.9 2 0 1.400 1L11.500 12c-.8 1.800-1.600 3-3.500 3-2.200 0-3-2-3.800-6z" {...S} />
          </NavBtn>
          <NavBtn label="Camera view">
            <g className="[--ib:#222]">{ICONS.movie}</g>
          </NavBtn>
          <NavBtn label="Perspective">
            <path d="M4 2.500h8l2.500 11h-13zM6.500 2.500l-1 11M9.500 2.500l1 11M3.200 6h9.600M2.500 9.500h11" strokeWidth="1.100" />
          </NavBtn>
        </div>
      </div>
      <RegionTab c="right-0 top-[65px]" />
    </section>
  );
}

/* ---------- outliner ---------- */

function Outliner() {
  const objs = [
    { n: "movie", label: "Camera", data: <span className="ml-5 flex size-5 items-center justify-center rounded bg-[#4d4d4d]"><Ic n="movieO" /></span> },
    { n: "bulb", label: "Light", data: <Ic n="lightData" c="ml-[22px] size-4" /> },
    { n: "tri", label: "グリッド", on: true, data: <><Ic n="wrenchO" c="ml-[22px] size-4 text-[#6d91dd]" /><Ic n="mesh" c="ml-1 size-4" /></> },
    { n: "tri", label: "モンキー", data: <Ic n="mesh" c="ml-[22px] size-4" /> },
  ];
  return (
    <section className="flex h-[269px] flex-col overflow-hidden rounded-md bg-[#282828]">
      <div className="flex h-[25px] items-center pl-[7px] pr-[7px]">
        <IconDrop n="tree" label="Editor type" />
        <IconDrop n="layers" label="Display mode" c="ml-[5px]" />
        <Search label="Filter outliner" c="ml-4 w-[111px]" />
        <IconDrop n="filter" label="Filter" c="ml-auto" />
        <Group c="ml-[5px]">
          <IconBtn n="addcol" label="New collection" c="bg-[#484848] text-[#ddd]" />
        </Group>
      </div>
      <ul className="relative flex-1 bg-[repeating-linear-gradient(#282828_0_20px,#2b2b2b_20px_40px)] pt-[1px] text-[#c4c4c4]">
        <li className="flex h-5 items-center pl-[22px]">
          <Ic n="archive" c="size-4 text-[#d8d8d8]" />
          <span className="ml-[6px] pt-[2px]">シーンコレクション</span>
        </li>
        <li className="flex h-5 items-center pl-[26px] pr-[9px]">
          <span className="text-[8px] leading-none text-[#c4c4c4]">▼</span>
          <span className="ml-[7px] flex size-5 items-center justify-center rounded bg-[#4d4d4d]"><Ic n="archive" c="size-4 text-[#e8e8e8]" /></span>
          <span className="ml-[4px] pt-[2px]">Collection</span>
          <label className="relative ml-auto flex">
            <input type="checkbox" defaultChecked aria-label="Exclude collection" className="peer size-[10px] appearance-none rounded-[1px] bg-[#e5e5e5]" />
            <svg viewBox="0 0 10 10" className="absolute inset-0 size-[10px]" fill="none" stroke="#282828" strokeWidth="1.6" aria-hidden="true"><path d="M2 5 4.300 7.300 8 2.500" /></svg>
          </label>
          <Toggles />
        </li>
        {objs.map((o) => (
          <li key={o.label} className={`flex h-5 items-center pl-[46px] pr-[9px] ${o.on ? "bg-[#334d80] [--ib:#334d80]" : ""}`}>
            <span className="w-2 text-[8px] leading-none">▶</span>
            <span className={`ml-[6px] flex size-5 items-center justify-center rounded text-[#c8814a] ${o.on ? "bg-[#6e6f7e]" : ""}`}><Ic n={o.n} /></span>
            <span className={`ml-[4px] pt-[2px] ${o.on ? "text-[#f0a94a]" : ""}`}>{o.label}</span>
            <span className="flex items-center text-[#00b386]">{o.data}</span>
            <span className="ml-auto" />
            <Toggles />
          </li>
        ))}
        <li aria-hidden="true" className="absolute left-[29px] top-[45px] h-[70px] w-px bg-[#5a5a5a]" />
      </ul>
    </section>
  );
}

function Toggles() {
  return (
    <>
      <button aria-label="Hide in viewport" className="ml-[7px] text-[#e5e5e5]"><Ic n="eye" /></button>
      <button aria-label="Disable in renders" className="ml-1 text-[#e5e5e5]"><Ic n="photo" /></button>
    </>
  );
}

/* ---------- properties ---------- */

const TAB_GROUPS: { n: string; c: string; label: string }[][] = [
  [{ n: "tool", c: "text-[#b5b5b5]", label: "Tool" }],
  [
    { n: "render", c: "text-[#b5b5b5]", label: "Render" },
    { n: "output", c: "text-[#b5b5b5]", label: "Output" },
    { n: "layers", c: "text-[#b5b5b5]", label: "View layer" },
    { n: "scene", c: "text-[#b5b5b5]", label: "Scene" },
    { n: "world", c: "text-[#b5525a]", label: "World" },
  ],
  [{ n: "archiveO", c: "text-[#dcdcdc]", label: "Collection" }],
  [
    { n: "object", c: "text-[#c8814a]", label: "Object" },
    { n: "wrench", c: "text-[#6e9bff]", label: "Modifiers" },
    { n: "particles", c: "text-[#5b83d6]", label: "Particles" },
    { n: "physics", c: "text-[#5b83d6]", label: "Physics" },
    { n: "constraint", c: "text-[#5b83d6]", label: "Constraints" },
    { n: "mesh", c: "text-[#00b386]", label: "Data" },
    { n: "material", c: "text-[#b5525a]", label: "Material" },
  ],
  [{ n: "texture", c: "text-[#b5525a]", label: "Texture" }],
];

function Properties() {
  return (
    <section className="flex flex-1 flex-col overflow-hidden rounded-md bg-[#303030]">
      <div className="flex h-[25px] items-center pl-2 pr-2">
        <IconDrop n="props" label="Editor type" />
        <Search label="Search properties" c="ml-[47px] w-[111px]" />
        <button aria-label="Options" className="ml-auto flex h-5 w-5 items-center justify-center rounded border border-[#3d3d3d] bg-[#282828] text-[#e0e0e0]"><Chev /></button>
      </div>
      <div className="flex flex-1">
        <nav className="flex w-7 shrink-0 flex-col bg-[#1d1d1d] pt-2">
          {TAB_GROUPS.map((g, i) => (
            <div key={i} className="mb-[3px] border-b border-[#171717] pb-[4px]">
              {g.map((t) => (
                <button key={t.n} aria-label={t.label} className={`ml-[2px] flex h-7 w-[26px] items-center justify-center rounded-l ${t.c} ${t.n === "wrench" ? "bg-[#303030]" : ""}`}>
                  <Ic n={t.n} />
                </button>
              ))}
            </div>
          ))}
        </nav>
        <div className="min-w-0 flex-1 pl-2 pr-2 text-[#dcdcdc]">
          <div className="flex h-9 items-center pl-[2px] pr-px">
            <Ic n="object" c="size-4 text-[#e5e5e5]" />
            <span className="ml-[9px] pt-[2px]">グリッド</span>
            <ChevRight c="ml-[14px]" />
            <Ic n="nodes" c="ml-[9px] size-4 text-[#e5e5e5]" />
            <span className="ml-2 pt-[2px]">GeometryNodes</span>
            <Ic n="pin" c="ml-auto size-4 text-[#a0a0a0]" />
          </div>
          <Drop value="モディファイアーを追加" label="Add modifier" c="mt-2 w-full" />
          <div className="mt-[10px] rounded border border-[#4772b3] bg-[#3d3d3d] px-2 pb-px pt-[3px]">
            <div className="flex h-[18px] items-center">
              <Chev c="size-[9px] text-[#aaa]" />
              <Ic n="nodes" c="ml-[4px] size-4 text-[#e5e5e5]" />
              <div className="ml-[11px] flex h-[18px] gap-px overflow-hidden rounded-[3px]">
                <input aria-label="Modifier name" defaultValue="Geo..." className="w-[45px] bg-[#1d1d1d] pl-2 pt-px outline-none" />
                <IconBtn n="mesh" label="On cage" c="bg-[#545454] text-[#e5e5e5]" />
                <IconBtn n="vmode" label="Edit mode" c="bg-[#4772b3] text-white" />
                <IconBtn n="monitor" label="Realtime" c="bg-[#4772b3] text-white" />
                <IconBtn n="photo" label="Render" c="bg-[#4772b3] text-white [--ib:#4772b3]" />
                <ChevBtn label="More" c="w-[19px] bg-[#282828]" />
              </div>
              <button aria-label="Remove modifier" className="ml-1 text-[#e5e5e5]"><Ic n="close" c="size-[14px]" /></button>
              <svg viewBox="0 0 12 6" className="ml-auto mr-[-2px] h-[6px] w-3" aria-hidden="true">
                <path d="M0 1h12M0 4.500h12" stroke="#999" strokeDasharray="1 2" />
              </svg>
            </div>
            <div className="mt-3 flex h-[18px] gap-px overflow-hidden rounded-[3px]">
              <button aria-label="Browse node groups" className="flex w-[30px] items-center justify-center gap-[3px] bg-[#282828] text-[#e5e5e5]"><Ic n="nodes" /><Chev /></button>
              <input aria-label="Node group" defaultValue="Geometry Nodes" className="min-w-0 flex-1 bg-[#1d1d1d] pl-[7px] pt-px outline-none" />
              <IconBtn n="shield" label="Fake user" c="bg-[#545454] text-[#aaa]" />
              <IconBtn n="dup" label="Duplicate" c="bg-[#545454] text-[#e5e5e5]" />
              <IconBtn n="close" label="Unlink" c="bg-[#545454] text-[#e5e5e5]" />
            </div>
            <button className="mt-[14px] flex h-[18px] items-center pl-[15px]">
              <ChevRight c="text-[#aaa]" />
              <span className="ml-[6px] pt-px">出力属性</span>
            </button>
          </div>
        </div>
      </div>
    </section>
  );
}

/* ---------- node editor ---------- */

type SockKind = "geo" | "vec" | "vecD" | "vecO" | "boolO" | "float" | "floatO" | "int" | "intD" | "obj" | "bool" | "hollow";
const SOCK: Record<SockKind, React.ReactNode> = {
  geo: <circle cx="5" cy="5" r="3.200" fill="#00d6a3" />,
  vec: <circle cx="5" cy="5" r="3.200" fill="#6363c7" />,
  vecD: <path d="M5 1.500 8.500 5 5 8.500 1.500 5z" fill="#6363c7" />,
  vecO: <path d="M5 2.200 7.800 5 5 7.800 2.200 5z" fill="#1d1d1d" stroke="#6363c7" strokeWidth="1.300" />,
  boolO: <path d="M5 2.200 7.800 5 5 7.800 2.200 5z" fill="#1d1d1d" stroke="#cca6d6" strokeWidth="1.300" />,
  floatO: <path d="M5 2.200 7.800 5 5 7.800 2.200 5z" fill="#1d1d1d" stroke="#a1a1a1" strokeWidth="1.300" />,
  float: <circle cx="5" cy="5" r="3" fill="#a1a1a1" />,
  int: <circle cx="5" cy="5" r="3" fill="#598c5c" />,
  intD: <path d="M5 1.500 8.500 5 5 8.500 1.500 5z" fill="#598c5c" />,
  obj: <circle cx="5" cy="5" r="3.200" fill="#ed9e5c" />,
  bool: <circle cx="5" cy="5" r="3.200" fill="#cca6d6" />,
  hollow: <circle cx="5" cy="5" r="3.200" fill="#1d1d1d" stroke="#777" strokeWidth="1.200" />,
};

function Sock({ k, side, c = "top-1/2 -mt-[5px]" }: { k: SockKind; side: "l" | "r"; c?: string }) {
  return (
    <svg viewBox="0 0 10 10" className={`absolute size-[10px] ${side === "l" ? "-left-[14px]" : "-right-[14px]"} ${c}`} aria-hidden="true">
      {SOCK[k]}
    </svg>
  );
}

function Out({ k, label }: { k: SockKind; label: string }) {
  return (
    <div className="relative flex h-[17px] items-center justify-end">
      {label}
      <Sock k={k} side="r" />
    </div>
  );
}

function In({ k, label, children }: { k?: SockKind; label?: string; children?: React.ReactNode }) {
  return (
    <div className="relative flex h-[17px] items-center whitespace-nowrap">
      {label}
      {children}
      {k && <Sock k={k} side="l" />}
    </div>
  );
}

function Num({ label, value, on, c = "h-[14px] rounded-[2px]" }: { label: string; value: string; on?: boolean; c?: string }) {
  return (
    <label className={`flex w-full items-center ${on ? "bg-[#4772b3] pl-[7px] pr-[7px]" : "bg-[#545454] pl-[11px] pr-[11px]"} ${c}`}>
      <span className="shrink-0">{label}</span>
      <input aria-label={label} defaultValue={value} className="h-full w-0 min-w-0 flex-1 bg-transparent text-right outline-none" />
    </label>
  );
}

function Node({ c, head, title, children, sel }: { c: string; head: string; title: string; children: React.ReactNode; sel?: boolean }) {
  return (
    <article className={`absolute rounded-[3px] bg-[#303030] text-[9px] leading-[14px] text-[#e2e2e2] ${sel ? "outline outline-1 outline-white" : ""} shadow-[0_2px_7px_2px_rgb(0_0_0/0.45)] ${c}`}>
      <header className={`flex h-[15px] items-center gap-[5px] whitespace-nowrap rounded-t-[3px] pb-px pl-2 ${head}`}>
        <Chev />
        {title}
      </header>
      <div className="px-[9px]">{children}</div>
    </article>
  );
}

function MiniDrop({ value, label, c = "w-full" }: { value: string; label: string; c?: string }) {
  return (
    <div className={`relative flex h-[15px] items-center rounded-[3px] border border-[#3d3d3d] bg-[#282828] ${c}`}>
      <select aria-label={label} className="h-full w-full appearance-none bg-transparent pl-[5px] pr-3 leading-none outline-none">
        <option>{value}</option>
      </select>
      <Chev c="pointer-events-none absolute right-[2px] size-[7px]" />
    </div>
  );
}

function Links() {
  return (
    <svg className="absolute inset-0 size-full" aria-hidden="true">
      <defs>
        <pattern id="dots" x="2" y="30" width="31" height="31" patternUnits="userSpaceOnUse">
          <rect width="3" height="3" fill="#282828" />
        </pattern>
        <linearGradient id="toWhite" x1="632" y1="0" x2="694" y2="0" gradientUnits="userSpaceOnUse">
          <stop offset="0" stopColor="#6363c7" />
          <stop offset="1" stopColor="#f0f0ff" />
        </linearGradient>
        <linearGradient id="toPurple" x1="803" y1="0" x2="865" y2="0" gradientUnits="userSpaceOnUse">
          <stop offset="0" stopColor="#f0f0ff" />
          <stop offset="1" stopColor="#6363c7" />
        </linearGradient>
      </defs>
      <rect width="100%" height="100%" fill="url(#dots)" />
      <g transform="translate(-1 -552)" fill="none" strokeWidth="2" stroke="#00d6a3">
        <path d="M459 545 460.700 552C474 610 480 725 500.500 725.500" />
        <path d="M632 648.500C710 648.500 787 638 865 638" />
        <path d="M770 550C860 557 930 559.500 1035 559.500" />
        <path d="M973 618C997 618 1007 563 1034 563" />
        <path d="M802.500 916C830 905 830 672 865 672" />
        <path d="M632 665.500C662 665.500 658 770 694 770" stroke="url(#toWhite)" strokeWidth="1.400" strokeDasharray="5 1" />
        <path d="M632 683C664 683 658 804.500 694 804.500" stroke="url(#toWhite)" strokeWidth="1.400" strokeDasharray="5 1" />
        <path d="M803 708.500C833 708.500 835 723 865 723" stroke="url(#toPurple)" strokeWidth="1.400" strokeDasharray="5 1" />
      </g>
    </svg>
  );
}

function NodeEditor() {
  return (
    <section className="flex min-h-[449px] flex-1 flex-col overflow-hidden rounded-md bg-[#1d1d1d]">
      <div className="flex h-[25px] items-center bg-[#232323] pl-[7px] pr-[6px]">
        <IconDrop n="nodes" label="Editor type" />
        <Menus c="ml-3" items={["ビュー", "選択", "追加", "ノード"]} />
        <span className="flex-[359]" />
        <Group c="w-[211px] bg-[#1d1d1d]">
          <button aria-label="Browse node groups" className="flex h-full w-8 items-center justify-center gap-[3px] border-r border-[#3d3d3d] bg-[#282828] text-[#e0e0e0]"><Ic n="nodes" /><Chev /></button>
          <input aria-label="Node group" defaultValue="Geometry Nodes" className="min-w-0 flex-1 bg-transparent pl-1 pt-px text-[#e5e5e5] outline-none" />
          <span className="flex gap-px">
            <IconBtn n="shield" label="Fake user" c="bg-[#545454] text-[#aaa]" />
            <IconBtn n="dup" label="Duplicate" c="bg-[#545454] text-[#e5e5e5]" />
            <IconBtn n="close" label="Unlink" c="bg-[#545454] text-[#e5e5e5]" />
          </span>
        </Group>
        <Ic n="pin" c="ml-[7px] size-4 text-[#a0a0a0]" />
        <span className="flex-[458]" />
        <Group><IconBtn n="up" label="Parent node tree" c="bg-[#303030] text-[#666]" /></Group>
        <Group c="ml-[5px]">
          <IconBtn n="magnet" label="Snap" c="bg-[#545454] text-[#aaa]" />
          <button aria-label="Snap to" className="flex w-[30px] items-center justify-center gap-[3px] text-[#e0e0e0]"><Ic n="grid" /><Chev /></button>
        </Group>
        <Group c="ml-[5px]">
          <IconBtn n="overlay" label="Overlays" c="bg-[#4772b3] text-white" />
          <ChevBtn label="Overlay options" c="w-[18px]" />
        </Group>
      </div>
      <div className="relative flex-1 overflow-hidden">
        <Links />

        <article className="absolute left-[342px] top-[-30px] h-[43px] w-[108px] rounded-[3px] bg-[#303030] shadow-[0_2px_7px_2px_rgb(0_0_0/0.45)]">
          <Sock k="hollow" side="r" c="bottom-[7px] !-right-[5px]" />
        </article>
        <article className="absolute left-[1034px] top-[-30px] flex h-[51px] w-[108px] items-end rounded-[3px] bg-[#303030] pb-[5px] pl-[9px] text-[9px] leading-[14px] text-[#e2e2e2] shadow-[0_2px_7px_2px_rgb(0_0_0/0.45)]">
          ジオメトリ
          <span className="absolute -left-[3px] bottom-[5px] h-[13px] w-[5px] rounded-full bg-[#00d6a3]" />
        </article>
        <article className="absolute left-[1204px] top-[-30px] h-[39px] w-[108px] rounded-[3px] bg-[#303030] shadow-[0_2px_7px_2px_rgb(0_0_0/0.45)]">
          <Sock k="float" side="l" c="bottom-[5px] !-left-[6px]" />
        </article>

        <Node c="left-[500px] top-[70px] w-[131px] pb-1" head="bg-[#1e7459]" title="面にポイント配置">
          <div className="pt-[3px]">
            <Out k="geo" label="ポイント" />
            <Out k="vecD" label="ノーマル" />
            <Out k="vecD" label="回転" />
          </div>
          <div className="-mx-[2px] mb-[3px] mt-[7px]"><MiniDrop value="ポアソンディスク" label="Distribution" /></div>
          <In k="geo" label="メッシュ" />
          <In k="boolO" label="選択" />
          <div className="-mx-px">
            <In><Num label="最小距離" value="0.2 m" /><Sock k="float" side="l" c="top-1/2 -mt-[5px] !-left-[13px]" /></In>
            <In><Num label="最大密度" value="10.000" /><Sock k="float" side="l" c="top-1/2 -mt-[5px] !-left-[13px]" /></In>
            <In><Num label="密度係数" value="1.000" on /><Sock k="floatO" side="l" c="top-1/2 -mt-[5px] !-left-[13px]" /></In>
            <In><Num label="シード" value="0" /><Sock k="int" side="l" c="top-1/2 -mt-[5px] !-left-[13px]" /></In>
          </div>
        </Node>

        <Node sel c="left-[693px] top-[130px] w-[108px] pb-1" head="bg-[#235f85]" title="Align Euler to Vector">
          <div className="pt-[2px]"><Out k="vecD" label="回転" /></div>
          <div className="mt-2 flex h-[14px] gap-px overflow-hidden rounded-[2px]">
            {["X", "Y", "Z"].map((a) => (
              <button key={a} className={`flex-1 leading-none ${a === "Z" ? "bg-[#4772b3]" : "bg-[#545454]"}`}>{a}</button>
            ))}
          </div>
          <div className="my-[4px] flex h-[15px] items-center">
            <span className="w-10">ピボッ...</span>
            <MiniDrop value="自動" label="Pivot axis" c="w-[51px]" />
          </div>
          <In k="vecD" label="回転" />
          <In k="floatO"><Num label="係数" value="1.000" on /></In>
          <In k="vecD" label="ベクトル" />
        </Node>

        <Node c="left-[864px] top-[40px] w-[108px] pb-1" head="bg-[#1e7459]" title="ポイント...タンス作成">
          <div className="pt-[2px]"><Out k="geo" label="インスタンス" /></div>
          <div className="mt-[3px]">
            <In k="geo" label="ポイント" />
            <In k="boolO" label="選択" />
            <In k="geo" label="インスタンス" />
            <In k="boolO">
              <label className="flex items-center gap-[2px]">
                <input type="checkbox" className="size-[11px] appearance-none rounded-[2px] bg-[#545454]" />
                インスタンスのみ
              </label>
            </In>
            <In k="intD" label="インスタンスインデ..." />
            <In k="vecD" label="回転" />
            <In label="スケール:" />
            <div className="relative mt-px flex flex-col gap-px overflow-visible">
              <Num label="X" value="0.050" c="h-[14px] rounded-t-[2px]" />
              <Num label="Y" value="0.050" c="h-[14px]" />
              <Num label="Z" value="0.050" c="h-[14px] rounded-b-[2px]" />
              <Sock k="vecO" side="l" c="top-[10px]" />
            </div>
          </div>
        </Node>

        <Node c="left-[693px] top-[286px] w-[108px] pb-1" head="bg-[#85304d]" title="オブジェクト情報">
          <div className="pt-[3px]">
            <Out k="vec" label="位置" />
            <Out k="vec" label="回転" />
            <Out k="vec" label="スケール" />
            <Out k="geo" label="ジオメトリ" />
          </div>
          <div className="mt-2 flex h-[14px] gap-px overflow-hidden whitespace-nowrap rounded-[2px]">
            <button className="w-[45px] bg-[#4772b3]">オリジナ...</button>
            <button className="flex-1 bg-[#545454]">相対</button>
          </div>
          <div className="relative mt-[5px] flex h-[14px] items-center rounded-[2px] border border-[#3d3d3d] bg-[#1d1d1d] px-[2px]">
            <Ic n="object" c="size-3" />
            <input aria-label="Object" defaultValue="モンキー" className="ml-[4px] min-w-0 flex-1 bg-transparent outline-none" />
            <Ic n="close" c="size-[10px]" />
            <Sock k="obj" side="l" />
          </div>
          <div className="mt-[2px]">
            <In k="bool">
              <label className="flex items-center gap-[2px]">
                <input type="checkbox" className="size-[10px] appearance-none rounded-[2px] bg-[#545454]" />
                インスタンスと
              </label>
            </In>
          </div>
        </Node>

        <div className="relative flex h-11 items-center pl-[17px] text-[#dcdcdc] [text-shadow:0_1px_2px_#000]">
          <Ic n="object" c="size-4 text-[#e5e5e5]" />
          <span className="ml-2 pt-[2px]">グリッド</span>
          <ChevRight c="ml-4" />
          <Ic n="wrench" c="ml-[9px] size-4 text-[#e5e5e5]" />
          <span className="ml-[7px] pt-[2px]">GeometryNodes</span>
          <ChevRight c="ml-4" />
          <Ic n="nodes" c="ml-[9px] size-4 text-[#e5e5e5]" />
          <span className="ml-[7px] pt-[2px]">Geometry Nodes</span>
        </div>
        <RegionTab c="-left-[3px] top-[14px]" flip />
        <RegionTab c="right-0 top-[14px]" />
        <svg viewBox="0 0 12 19" className="absolute left-[1135px] top-[204px] h-[19px] w-3" aria-hidden="true">
          <path d="M1 1v14.500l3.300-3 2.300 5.300 2.300-1L6.600 11.500H11z" fill="#fff" stroke="#111" strokeWidth=".8" />
        </svg>
      </div>
    </section>
  );
}

/* ---------- status bar ---------- */

function Mouse({ b }: { b: "l" | "m" | "r" | "d" }) {
  return (
    <svg viewBox="0 0 16 16" className="size-4 shrink-0" fill="none" stroke="currentColor" strokeWidth="1.1" aria-hidden="true">
      <path d="M1 5a4 4 0 0 1 4-4h1a4 4 0 0 1 4 4v6a4 4 0 0 1-4 4H5a4 4 0 0 1-4-4z" />
      {(b === "l" || b === "d") && <path d="M1 5a4 4 0 0 1 4-4v6H1z" {...S} />}
      {b === "m" && <path d="M4.200 3h2.600v5H4.200z" {...S} />}
      {b === "r" && <path d="M10 5a4 4 0 0 0-4-4v6h4z" {...S} />}
      {b === "d" && <path d="M12.500 1v8M15 3v4" strokeWidth="1" />}
    </svg>
  );
}

function StatusBar() {
  return (
    <footer className="flex h-[21px] items-center whitespace-nowrap bg-[#1b1b1b] pl-3 pr-[9px] text-[#8e8e8e]">
      <Mouse b="l" /><span className="ml-[6px]">選択</span>
      <span className="ml-[11px] flex"><Mouse b="d" /></span><span className="ml-2">ボックス選択</span>
      <span className="ml-[66px] flex"><Mouse b="m" /></span><span className="ml-[6px]">視点の移動</span>
      <span className="ml-[134px] flex"><Mouse b="r" /></span><span className="ml-2">ノードコンテクストメニュー</span>
      <span className="ml-auto">Collection | グリッド | 頂点:1,135 | 面:1,100 | 三角面:2,136 | オブジェクト:28/31 | メモリ: 21.0 MiB | VRAM: 0.7/6.0 GiB | 3.0.0</span>
    </footer>
  );
}

export default function App() {
  return (
    <div lang="ja" className="flex min-h-screen flex-col overflow-hidden bg-[#161616] font-['DejaVu_Sans_Condensed','Noto_Sans','Noto_Sans_CJK_JP',sans-serif] text-[11px] leading-4 [--ib:#2b2b2b]">
      <TopBar />
      <main className="grid flex-1 grid-cols-[minmax(0,1fr)_289px] gap-[3px] px-px pb-px">
        <div className="flex min-w-0 flex-col gap-[3px]">
          <div className="grid grid-cols-[573fr_810fr] gap-[3px]">
            <Spreadsheet />
            <Viewport />
          </div>
          <NodeEditor />
        </div>
        <div className="flex flex-col gap-[3px]">
          <Outliner />
          <Properties />
        </div>
      </main>
      <StatusBar />
    </div>
  );
}
